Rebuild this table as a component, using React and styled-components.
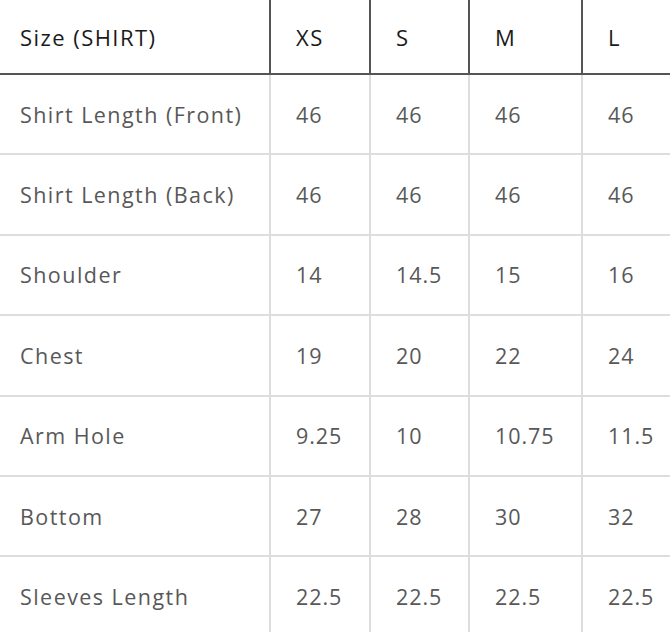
import React from "react";
import styled, { createGlobalStyle } from "styled-components";

const Global = createGlobalStyle`
  html, body { margin: 0; padding: 0; background: #fff; overflow: hidden; }
  body { font-family: "Open Sans", "Noto Sans", sans-serif; }
`;

const Table = styled.table`
  border-collapse: separate;
  border-spacing: 0;
  table-layout: fixed;
  width: 771px;
`;

const HeadCell = styled.th`
  height: 73px;
  padding: 0 0 0 ${(p) => (p.$first ? 20 : 25)}px;
  text-align: left;
  vertical-align: middle;
  font-weight: 400;
  font-size: 22px;
  letter-spacing: 1.45px;
  color: #1a1a1a;
  border-right: 2px solid #555;
  border-bottom: 2px solid #555;
  box-sizing: content-box;
  white-space: nowrap;
`;

const Cell = styled.td`
  height: 78.4px;
  padding: 0 0 0 ${(p) => (p.$first ? 20 : 25)}px;
  vertical-align: middle;
  font-size: 21.5px;
  letter-spacing: ${(p) => (p.$first ? 1.45 : 0.9)}px;
  color: #585858;
  border-right: 2px solid #ddd;
  border-bottom: 2px solid #ddd;
  box-sizing: content-box;
  white-space: nowrap;
`;

const sizes = ["XS", "S", "M", "L"];
const widths = [271, 100, 99, 113, 188];

const rows = [
  ["Shirt Length (Front)", "46", "46", "46", "46"],
  ["Shirt Length (Back)", "46", "46", "46", "46"],
  ["Shoulder", "14", "14.5", "15", "16"],
  ["Chest", "19", "20", "22", "24"],
  ["Arm Hole", "9.25", "10", "10.75", "11.5"],
  ["Bottom", "27", "28", "30", "32"],
  ["Sleeves Length", "22.5", "22.5", "22.5", "22.5"],
];

export default function App() {
  return (
    <>
      <Global />
      <Table>
        <colgroup>
          {widths.map((w, i) => (
            <col key={i} style={{ width: w }} />
          ))}
        </colgroup>
        <thead>
          <tr>
            <HeadCell $first>Size (SHIRT)</HeadCell>
            {sizes.map((s) => (
              <HeadCell key={s}>{s}</HeadCell>
            ))}
          </tr>
        </thead>
        <tbody>
          {rows.map((r) => (
            <tr key={r[0]}>
              {r.map((v, i) => (
                <Cell key={i} $first={i === 0}>
                  {v}
                </Cell>
              ))}
            </tr>
          ))}
        </tbody>
      </Table>
    </>
  );
}
